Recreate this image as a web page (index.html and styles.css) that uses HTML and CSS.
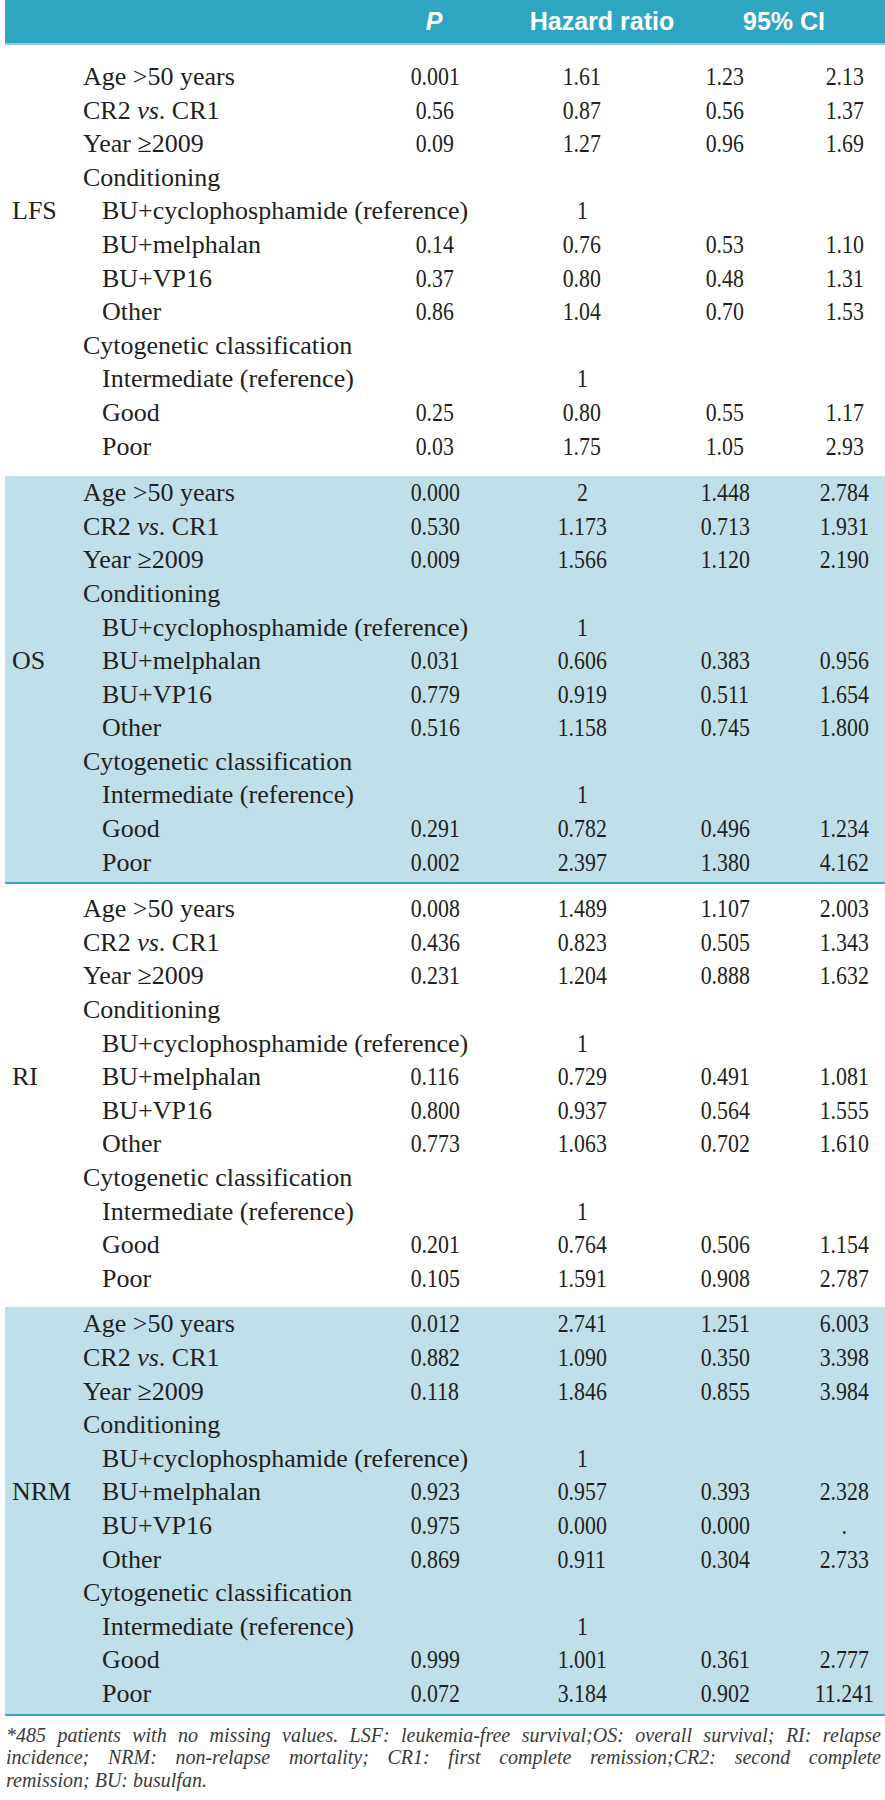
FILE: index.html
```html
<!DOCTYPE html>
<html>
<head>
<meta charset="utf-8">
<link rel="stylesheet" href="styles.css">
</head>
<body>
<div class="page">
  <div class="thead">
    <div class="h-p">P</div>
    <div class="h-hr">Hazard ratio</div>
    <div class="h-ci">95% CI</div>
  </div>

  <div class="sec sec-a">
    <div class="row"><div class="grp"></div><div class="lbl">Age &gt;50 years</div><div class="n"><span>0.001</span></div><div class="n"><span>1.61</span></div><div class="n"><span>1.23</span></div><div class="n last"><span>2.13</span></div></div>
    <div class="row"><div class="grp"></div><div class="lbl">CR2 <i>vs</i>. CR1</div><div class="n"><span>0.56</span></div><div class="n"><span>0.87</span></div><div class="n"><span>0.56</span></div><div class="n last"><span>1.37</span></div></div>
    <div class="row"><div class="grp"></div><div class="lbl">Year ≥2009</div><div class="n"><span>0.09</span></div><div class="n"><span>1.27</span></div><div class="n"><span>0.96</span></div><div class="n last"><span>1.69</span></div></div>
    <div class="row"><div class="grp"></div><div class="lbl">Conditioning</div></div>
    <div class="row"><div class="grp">LFS</div><div class="lbl sub">BU+cyclophosphamide (reference)</div><div class="n"></div><div class="n"><span>1</span></div></div>
    <div class="row"><div class="grp"></div><div class="lbl sub">BU+melphalan</div><div class="n"><span>0.14</span></div><div class="n"><span>0.76</span></div><div class="n"><span>0.53</span></div><div class="n last"><span>1.10</span></div></div>
    <div class="row"><div class="grp"></div><div class="lbl sub">BU+VP16</div><div class="n"><span>0.37</span></div><div class="n"><span>0.80</span></div><div class="n"><span>0.48</span></div><div class="n last"><span>1.31</span></div></div>
    <div class="row"><div class="grp"></div><div class="lbl sub">Other</div><div class="n"><span>0.86</span></div><div class="n"><span>1.04</span></div><div class="n"><span>0.70</span></div><div class="n last"><span>1.53</span></div></div>
    <div class="row"><div class="grp"></div><div class="lbl">Cytogenetic classification</div></div>
    <div class="row"><div class="grp"></div><div class="lbl sub">Intermediate (reference)</div><div class="n"></div><div class="n"><span>1</span></div></div>
    <div class="row"><div class="grp"></div><div class="lbl sub">Good</div><div class="n"><span>0.25</span></div><div class="n"><span>0.80</span></div><div class="n"><span>0.55</span></div><div class="n last"><span>1.17</span></div></div>
    <div class="row"><div class="grp"></div><div class="lbl sub">Poor</div><div class="n"><span>0.03</span></div><div class="n"><span>1.75</span></div><div class="n"><span>1.05</span></div><div class="n last"><span>2.93</span></div></div>
  </div>

  <div class="sec sec-b shaded">
    <div class="row"><div class="grp"></div><div class="lbl">Age &gt;50 years</div><div class="n"><span>0.000</span></div><div class="n"><span>2</span></div><div class="n"><span>1.448</span></div><div class="n last"><span>2.784</span></div></div>
    <div class="row"><div class="grp"></div><div class="lbl">CR2 <i>vs</i>. CR1</div><div class="n"><span>0.530</span></div><div class="n"><span>1.173</span></div><div class="n"><span>0.713</span></div><div class="n last"><span>1.931</span></div></div>
    <div class="row"><div class="grp"></div><div class="lbl">Year ≥2009</div><div class="n"><span>0.009</span></div><div class="n"><span>1.566</span></div><div class="n"><span>1.120</span></div><div class="n last"><span>2.190</span></div></div>
    <div class="row"><div class="grp"></div><div class="lbl">Conditioning</div></div>
    <div class="row"><div class="grp"></div><div class="lbl sub">BU+cyclophosphamide (reference)</div><div class="n"></div><div class="n"><span>1</span></div></div>
    <div class="row"><div class="grp">OS</div><div class="lbl sub">BU+melphalan</div><div class="n"><span>0.031</span></div><div class="n"><span>0.606</span></div><div class="n"><span>0.383</span></div><div class="n last"><span>0.956</span></div></div>
    <div class="row"><div class="grp"></div><div class="lbl sub">BU+VP16</div><div class="n"><span>0.779</span></div><div class="n"><span>0.919</span></div><div class="n"><span>0.511</span></div><div class="n last"><span>1.654</span></div></div>
    <div class="row"><div class="grp"></div><div class="lbl sub">Other</div><div class="n"><span>0.516</span></div><div class="n"><span>1.158</span></div><div class="n"><span>0.745</span></div><div class="n last"><span>1.800</span></div></div>
    <div class="row"><div class="grp"></div><div class="lbl">Cytogenetic classification</div></div>
    <div class="row"><div class="grp"></div><div class="lbl sub">Intermediate (reference)</div><div class="n"></div><div class="n"><span>1</span></div></div>
    <div class="row"><div class="grp"></div><div class="lbl sub">Good</div><div class="n"><span>0.291</span></div><div class="n"><span>0.782</span></div><div class="n"><span>0.496</span></div><div class="n last"><span>1.234</span></div></div>
    <div class="row"><div class="grp"></div><div class="lbl sub">Poor</div><div class="n"><span>0.002</span></div><div class="n"><span>2.397</span></div><div class="n"><span>1.380</span></div><div class="n last"><span>4.162</span></div></div>
  </div>

  <div class="sec sec-c">
    <div class="row"><div class="grp"></div><div class="lbl">Age &gt;50 years</div><div class="n"><span>0.008</span></div><div class="n"><span>1.489</span></div><div class="n"><span>1.107</span></div><div class="n last"><span>2.003</span></div></div>
    <div class="row"><div class="grp"></div><div class="lbl">CR2 <i>vs</i>. CR1</div><div class="n"><span>0.436</span></div><div class="n"><span>0.823</span></div><div class="n"><span>0.505</span></div><div class="n last"><span>1.343</span></div></div>
    <div class="row"><div class="grp"></div><div class="lbl">Year ≥2009</div><div class="n"><span>0.231</span></div><div class="n"><span>1.204</span></div><div class="n"><span>0.888</span></div><div class="n last"><span>1.632</span></div></div>
    <div class="row"><div class="grp"></div><div class="lbl">Conditioning</div></div>
    <div class="row"><div class="grp"></div><div class="lbl sub">BU+cyclophosphamide (reference)</div><div class="n"></div><div class="n"><span>1</span></div></div>
    <div class="row"><div class="grp">RI</div><div class="lbl sub">BU+melphalan</div><div class="n"><span>0.116</span></div><div class="n"><span>0.729</span></div><div class="n"><span>0.491</span></div><div class="n last"><span>1.081</span></div></div>
    <div class="row"><div class="grp"></div><div class="lbl sub">BU+VP16</div><div class="n"><span>0.800</span></div><div class="n"><span>0.937</span></div><div class="n"><span>0.564</span></div><div class="n last"><span>1.555</span></div></div>
    <div class="row"><div class="grp"></div><div class="lbl sub">Other</div><div class="n"><span>0.773</span></div><div class="n"><span>1.063</span></div><div class="n"><span>0.702</span></div><div class="n last"><span>1.610</span></div></div>
    <div class="row"><div class="grp"></div><div class="lbl">Cytogenetic classification</div></div>
    <div class="row"><div class="grp"></div><div class="lbl sub">Intermediate (reference)</div><div class="n"></div><div class="n"><span>1</span></div></div>
    <div class="row"><div class="grp"></div><div class="lbl sub">Good</div><div class="n"><span>0.201</span></div><div class="n"><span>0.764</span></div><div class="n"><span>0.506</span></div><div class="n last"><span>1.154</span></div></div>
    <div class="row"><div class="grp"></div><div class="lbl sub">Poor</div><div class="n"><span>0.105</span></div><div class="n"><span>1.591</span></div><div class="n"><span>0.908</span></div><div class="n last"><span>2.787</span></div></div>
  </div>

  <div class="sec sec-d shaded">
    <div class="row"><div class="grp"></div><div class="lbl">Age &gt;50 years</div><div class="n"><span>0.012</span></div><div class="n"><span>2.741</span></div><div class="n"><span>1.251</span></div><div class="n last"><span>6.003</span></div></div>
    <div class="row"><div class="grp"></div><div class="lbl">CR2 <i>vs</i>. CR1</div><div class="n"><span>0.882</span></div><div class="n"><span>1.090</span></div><div class="n"><span>0.350</span></div><div class="n last"><span>3.398</span></div></div>
    <div class="row"><div class="grp"></div><div class="lbl">Year ≥2009</div><div class="n"><span>0.118</span></div><div class="n"><span>1.846</span></div><div class="n"><span>0.855</span></div><div class="n last"><span>3.984</span></div></div>
    <div class="row"><div class="grp"></div><div class="lbl">Conditioning</div></div>
    <div class="row"><div class="grp"></div><div class="lbl sub">BU+cyclophosphamide (reference)</div><div class="n"></div><div class="n"><span>1</span></div></div>
    <div class="row"><div class="grp">NRM</div><div class="lbl sub">BU+melphalan</div><div class="n"><span>0.923</span></div><div class="n"><span>0.957</span></div><div class="n"><span>0.393</span></div><div class="n last"><span>2.328</span></div></div>
    <div class="row"><div class="grp"></div><div class="lbl sub">BU+VP16</div><div class="n"><span>0.975</span></div><div class="n"><span>0.000</span></div><div class="n"><span>0.000</span></div><div class="n last"><span>.</span></div></div>
    <div class="row"><div class="grp"></div><div class="lbl sub">Other</div><div class="n"><span>0.869</span></div><div class="n"><span>0.911</span></div><div class="n"><span>0.304</span></div><div class="n last"><span>2.733</span></div></div>
    <div class="row"><div class="grp"></div><div class="lbl">Cytogenetic classification</div></div>
    <div class="row"><div class="grp"></div><div class="lbl sub">Intermediate (reference)</div><div class="n"></div><div class="n"><span>1</span></div></div>
    <div class="row"><div class="grp"></div><div class="lbl sub">Good</div><div class="n"><span>0.999</span></div><div class="n"><span>1.001</span></div><div class="n"><span>0.361</span></div><div class="n last"><span>2.777</span></div></div>
    <div class="row"><div class="grp"></div><div class="lbl sub">Poor</div><div class="n"><span>0.072</span></div><div class="n"><span>3.184</span></div><div class="n"><span>0.902</span></div><div class="n last"><span>11.241</span></div></div>
  </div>

  <p class="note"><span class="ln">*485 patients with no missing values. LSF: leukemia-free survival;OS: overall survival; RI: relapse</span> <span class="ln">incidence; NRM: non-relapse mortality; CR1: first complete remission;CR2: second complete</span> <span class="ln end">remission; BU: busulfan.</span></p>
</div>
</body>
</html>
```

FILE: styles.css
```css
html, body {
  margin: 0;
  padding: 0;
  background: #ffffff;
}

.page {
  margin-left: 5px;
  width: 880px;
  font-family: "Liberation Serif", "Times New Roman", serif;
  color: #231f20;
}

.thead {
  display: grid;
  grid-template-columns: 384px 90px 204px 202px;
  height: 43px;
  align-items: center;
  background: #2fa6c1;
  color: #ffffff;
  font-family: "Liberation Sans Narrow", "Liberation Sans", Arial, sans-serif;
  font-weight: bold;
  font-size: 25px;
  border-bottom: 2px solid #8ccbdc;
}

.h-p {
  grid-column: 2;
  text-align: center;
  font-style: italic;
}

.h-hr {
  grid-column: 3;
  text-align: center;
  padding-left: 42px;
}

.h-ci {
  grid-column: 4;
  text-align: center;
}

.sec {
  padding: 15px 0 13px;
}

.sec-c {
  padding: 8px 0 12px;
}

.sec.shaded {
  background: #bfdfe9;
  padding: 0 0 3px;
  border-bottom: 2px solid #2fa6c1;
}

.row {
  display: grid;
  grid-template-columns: 78px 307px 90px 204px 82px 119px;
  height: 33.6px;
  align-items: center;
  font-size: 26px;
  line-height: 33.6px;
  white-space: nowrap;
}

.grp {
  padding-left: 7px;
}

.lbl.sub {
  padding-left: 19px;
}

.n {
  text-align: center;
}

.n.last {
  padding-left: 38px;
}

.n span {
  display: inline-block;
  transform: scaleX(0.84);
}

.note {
  margin: 8px 0 0;
  padding: 0 4px 0 1px;
  font-style: italic;
  font-size: 20px;
  line-height: 22.5px;
  color: #3a3a3a;
}

.ln {
  display: block;
  text-align: justify;
  text-align-last: justify;
}

.ln.end {
  text-align-last: left;
}
```
